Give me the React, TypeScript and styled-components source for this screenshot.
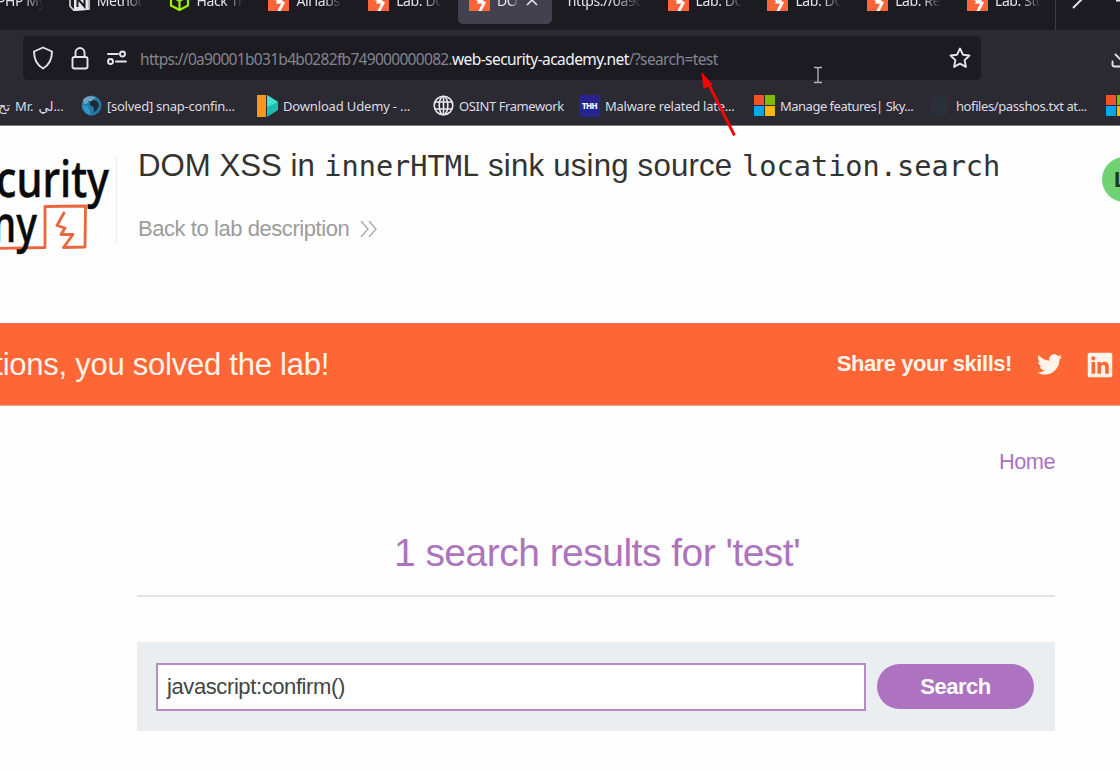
import React from "react";
import styled, { createGlobalStyle, css } from "styled-components";
import { FaTwitter, FaLinkedin } from "react-icons/fa";

const UI = `"Noto Sans", "Open Sans", "DejaVu Sans", sans-serif`;
const PAGE = `"Liberation Sans", Arial, sans-serif`;

const GlobalStyle = createGlobalStyle`
  * { box-sizing: border-box; }
  html, body { margin: 0; padding: 0; background: #fff; overflow: hidden; }
  #root { width: 1120px; height: 771px; overflow: hidden; }
`;

const Window = styled.div`
  position: relative;
  width: 1120px;
  height: 771px;
  overflow: hidden;
  display: flex;
  flex-direction: column;
  background: #fefefe;
`;

/* ---------- browser chrome ---------- */

const Chrome = styled.header`
  flex: none;
  height: 126px;
  background: #2b2a33;
  border-bottom: 1px solid #77767b;
  font-family: ${UI};
  color: #e4e3e8;
`;

const TabStrip = styled.div`
  height: 30px;
  overflow: hidden;
  display: flex;
  align-items: flex-end;
  background: #1c1b22;
`;

const TabRow = styled.div`
  flex: none;
  display: flex;
  width: 1099px;
  margin-left: -43px;
  height: 54px;
  border-right: 1px solid #3d3c45;
`;

const Tab = styled.div<{ $active?: boolean }>`
  flex: none;
  width: ${(p) => (p.$active ? "94px" : "99.8px")};
  ${(p) => p.$active && css`margin: 0 3.8px 0 2px;`}
  height: 48px;
  padding-left: ${(p) => (p.$active ? "11px" : "12px")};
  display: flex;
  align-items: center;
  gap: 7px;
  border-radius: 5px;
  background: ${(p) => (p.$active ? "#42414d" : "transparent")};
`;

const TabTitle = styled.span<{ $w?: number }>`
  flex: none;
  width: ${(p) => p.$w ?? 46}px;
  overflow: hidden;
  white-space: nowrap;
  font-size: 14px;
  line-height: 20px;
  padding-top: 1px;
  letter-spacing: -0.4px;
  mask-image: linear-gradient(to right, #000 60%, transparent 100%);
`;

const TabTools = styled.div`
  flex: none;
  display: flex;
  padding-left: 14px;
  height: 54px;
  align-items: flex-start;
`;

const NavBar = styled.div`
  height: 56px;
  padding: 6px 0 0 23px;
  display: flex;
  align-items: flex-start;
`;

const UrlField = styled.div`
  flex: none;
  width: 958px;
  height: 44px;
  padding: 0 9px;
  border-radius: 5px;
  background: #1c1b22;
  display: flex;
  align-items: center;
`;

const UrlIcons = styled.div`
  flex: none;
  width: 108px;
  height: 44px;
`;

const Url = styled.div`
  flex: 1;
  font-size: 15.5px;
  line-height: 24px;
  padding-top: 2px;
  white-space: nowrap;
`;

const UrlPart = styled.span<{ $ls: number; $host?: boolean }>`
  letter-spacing: ${(p) => p.$ls}px;
  color: ${(p) => (p.$host ? "#f4f3f7" : "#85848b")};
`;

const DownloadSlot = styled.div`
  flex: none;
  margin-left: 129px;
  height: 42px;
  display: flex;
  align-items: center;
`;

const Bookmarks = styled.div`
  height: 39px;
  display: flex;
  align-items: center;
  svg {
    flex: none;
  }
`;

const Bookmark = styled.div<{ $w: number }>`
  flex: none;
  width: ${(p) => p.$w}px;
  display: flex;
  align-items: center;
  gap: 5px;
`;

const BookmarkText = styled.span<{ $ls: number }>`
  font-size: 13px;
  line-height: 20px;
  white-space: nowrap;
  letter-spacing: ${(p) => p.$ls}px;
  color: #dddce2;
`;

const ArabicBookmark = styled.div`
  flex: none;
  width: 81px;
  display: flex;
  gap: 5px;
  font-size: 13px;
  line-height: 20px;
  white-space: nowrap;
  color: #dddce2;
`;

const ArabicStart = styled.span`
  width: 10px;
  display: flex;
  justify-content: flex-end;
`;

/* ---------- page ---------- */

const LabHeader = styled.section`
  flex: none;
  height: 197px;
  display: flex;
  align-items: flex-start;
  font-family: ${PAGE};
`;

const LogoBox = styled.div`
  flex: none;
  width: 117px;
  height: 88px;
  margin-top: 30px;
  border-right: 1px solid #ececec;
`;

const LabText = styled.div`
  flex: none;
  width: 985px;
  padding: 21px 0 0 21px;
`;

const Title = styled.h1`
  margin: 0;
  font-weight: 400;
  font-size: 31.2px;
  line-height: 38px;
  white-space: nowrap;
  color: #333332;
`;

const TitleMiddle = styled.span`
  letter-spacing: 0.2px;
`;

const Code = styled.code`
  margin-left: 0.8px;
  font-family: "DejaVu Sans Mono", monospace;
  font-size: 28.6px;
  line-height: 1;
`;

const BackLink = styled.a`
  margin-top: 31px;
  display: flex;
  align-items: center;
  gap: 11px;
  font-size: 22px;
  letter-spacing: -0.44px;
  line-height: 26px;
  color: #9c9c9c;
`;

const LabBadge = styled.span`
  flex: none;
  margin-top: 31px;
  width: 90px;
  height: 45px;
  padding-left: 12px;
  border-radius: 23px;
  background: #70d272;
  color: #1d3a20;
  font-size: 22.5px;
  font-weight: 700;
  line-height: 45px;
`;

const Banner = styled.section`
  flex: none;
  height: 83px;
  padding: 0 6px 0 0;
  display: flex;
  align-items: center;
  background: #ff6635;
  border-top: 1px solid #e5764f;
  border-bottom: 1px solid #eba587;
  font-family: ${PAGE};
  color: #fff3ea;
`;

const BannerMessage = styled.p`
  margin: 0;
  width: 329px;
  display: flex;
  justify-content: flex-end;
  font-size: 31px;
  letter-spacing: -0.25px;
  line-height: 40px;
  white-space: nowrap;
`;

const Share = styled.div`
  margin-left: auto;
  display: flex;
  align-items: center;
  gap: 24.5px;
  font-size: 22px;
  letter-spacing: -0.45px;
  font-weight: 700;
  line-height: 26px;
`;

const ShareLabel = styled.span`
  padding-bottom: 2px;
`;

const Content = styled.main`
  flex: none;
  width: 918px;
  margin-left: 137px;
  display: flex;
  flex-direction: column;
  font-family: ${PAGE};
  color: #ad74bd;
`;

const Home = styled.a`
  align-self: flex-end;
  margin-top: 43px;
  font-size: 21.8px;
  letter-spacing: -0.55px;
  line-height: 26px;
`;

const Results = styled.h2`
  margin: 56px 0 0;
  padding: 0 0 0 2px;
  height: 66px;
  text-align: center;
  font-size: 39px;
  letter-spacing: -0.52px;
  font-weight: 400;
  line-height: 43px;
  border-bottom: 2px solid #e3e3e5;
`;

const SearchPanel = styled.form`
  margin: 45px 0 0;
  height: 89px;
  padding: 0 21px 0 19px;
  display: flex;
  align-items: center;
  gap: 11px;
  background: #eaeef1;
`;

const SearchInput = styled.div`
  flex: 1;
  height: 48px;
  padding-left: 9px;
  border: 2px solid #b68cc4;
  background: #fff;
  color: #444;
  font-size: 22px;
  letter-spacing: -0.4px;
  line-height: 44px;
`;

const SearchButton = styled.button`
  flex: none;
  width: 157px;
  height: 45px;
  padding: 0;
  border: 0;
  border-radius: 23px;
  background: #ad73c0;
  color: #fff;
  font-family: ${PAGE};
  font-size: 22px;
  letter-spacing: -0.5px;
  font-weight: 700;
`;

/* ---------- overlays ---------- */

const Arrow = styled.svg`
  position: absolute;
  left: 695px;
  top: 68px;
`;

const TextCursor = styled.svg`
  position: absolute;
  left: 811px;
  top: 66px;
`;

/* ---------- icons ---------- */

const Burp = () => (
  <svg width="21" height="21" viewBox="0 0 21 21">
    <rect width="21" height="21" fill="#fa6437" />
    <path d="M12 1 4 9l5 2-1 2.500 5 .3L9.500 21l3 0L17 12.500l-3-2z" fill="#fff" />
  </svg>
);

const Notion = () => (
  <svg width="21" height="21" viewBox="0 0 21 21">
    <path d="M1 2 15 1l5 4v14l-15 1.500L1 16z" fill="#1c1b22" stroke="#dedee2" strokeWidth="1.600" />
    <path d="M5 6h14v13.500L5 20z" fill="#e8e8ec" />
    <path d="M8.500 17V8.500l7 8V8" fill="none" stroke="#1c1b22" strokeWidth="2" />
  </svg>
);

const HackBox = () => (
  <svg width="21" height="21" viewBox="0 0 21 21" fill="none" stroke="#9fef00" strokeWidth="2.200" strokeLinejoin="round">
    <path d="M10.500 1 19 6v9.500l-8.500 4.500L2 15.500V6zM2 6l8.500 5L19 6M10.500 11v9" />
  </svg>
);

const Microsoft = () => (
  <svg width="21" height="21" viewBox="0 0 21 21">
    <path d="M0 0h10v10H0z" fill="#f1512b" />
    <path d="M11 0h10v10H11z" fill="#80bb0b" />
    <path d="M0 11h10v10H0z" fill="#04a4ee" />
    <path d="M11 11h10v10H11z" fill="#fbb90c" />
  </svg>
);

const Earth = () => (
  <svg width="21" height="21" viewBox="0 0 21 21">
    <circle cx="10.500" cy="10.500" r="10" fill="#2379a8" />
    <path d="M2 5C4 1 11 0 15 3l-3 1-1 2-4 0-1 3-3 0z" fill="#72a4bd" />
    <path d="M9 6.500l4-1.500 4 2 1 4-3 5-2 1-.5-5-3.500-2z" fill="#1d2b39" />
    <path d="M1.500 10l5 1 2 4 1 5-4-1.500-3-4z" fill="#3596c6" />
  </svg>
);

const Udemy = () => (
  <svg width="21" height="22" viewBox="0 0 21 22">
    <path d="M0 0h9v22H0z" fill="#f7981d" />
    <path d="M10 0l11 7v8l-11 7z" fill="#18bfae" />
    <path d="M10 0l11 7-11 5z" fill="#45e0cd" />
  </svg>
);

const Globe = () => (
  <svg width="21" height="21" viewBox="0 0 21 21" fill="none" stroke="#e8e7ec" strokeWidth="1.600">
    <circle cx="10.500" cy="10.500" r="9.300" />
    <ellipse cx="10.500" cy="10.500" rx="4.300" ry="9.300" />
    <path d="M1.800 7h17.400M1.800 14h17.400M10.500 1v19" />
  </svg>
);

const ThhBox = styled.span`
  flex: none;
  width: 21px;
  height: 22px;
  background: #27238f;
  color: #fff;
  font-size: 8px;
  font-weight: 800;
  letter-spacing: -0.6px;
  line-height: 22px;
  text-align: center;
`;

const DarkIcon = styled.span`
  flex: none;
  width: 17px;
  height: 18px;
  border-radius: 3px;
  background: #29303a;
`;

const labTabs = ["Lab: DOM", "Lab: DOM", "Lab: Ref", "Lab: Stored"];

export default function App() {
  return (
    <Window>
      <GlobalStyle />
      <Chrome>
        <TabStrip>
          <TabRow>
            <Tab><svg width="21" height="21" /><TabTitle>PHP MySQL</TabTitle></Tab>
            <Tab><Notion /><TabTitle>Methodology</TabTitle></Tab>
            <Tab><HackBox /><TabTitle>Hack The</TabTitle></Tab>
            <Tab><Burp /><TabTitle>All labs |</TabTitle></Tab>
            <Tab><Burp /><TabTitle>Lab: DOM</TabTitle></Tab>
            <Tab $active>
              <Burp /><TabTitle $w={22}>DOM</TabTitle>
              <svg width="12" height="12" viewBox="0 0 12 12" stroke="#e4e3e8" strokeWidth="1.600"><path d="M1 1l10 10M11 1 1 11" /></svg>
            </Tab>
            <Tab><TabTitle $w={74}>https://0a900</TabTitle></Tab>
            {labTabs.map((t, i) => (
              <Tab key={i}><Burp /><TabTitle>{t}</TabTitle></Tab>
            ))}
          </TabRow>
          <TabTools>
            <svg width="60" height="54" viewBox="0 0 60 54" fill="none" stroke="#e4e3e8" strokeWidth="2">
              <path d="M3 15l9 8-9 9" />
              <path d="M46 24h14" strokeWidth="3" />
            </svg>
          </TabTools>
        </TabStrip>
        <NavBar>
          <UrlField>
            <UrlIcons>
              <svg width="108" height="44" viewBox="0 0 108 44" fill="none" stroke="#e4e3e8" strokeWidth="1.900" strokeLinejoin="round" strokeLinecap="round">
                <path d="M11 11.500 2 15.500c0 7 2 13 9 17 7-4 9-10 9-17z" />
                <rect x="40.500" y="21" width="15" height="11.500" rx="2" />
                <path d="M43.500 21v-4.500a4.500 4.500 0 0 1 9 0V21" />
                <path d="M76 18h10M84 25.500h10" />
                <circle cx="90.500" cy="18" r="2.500" />
                <circle cx="78.500" cy="25.500" r="2.500" />
              </svg>
            </UrlIcons>
            <Url>
              <UrlPart $ls={-0.69}>https://0a90001b031b4b0282fb749000000082.</UrlPart>
              <UrlPart $ls={-0.57} $host>web-security-academy.net</UrlPart>
              <UrlPart $ls={-0.6}>/?search=test</UrlPart>
            </Url>
            <svg width="24" height="24" viewBox="0 0 24 24" fill="none" stroke="#e4e3e8" strokeWidth="1.900" strokeLinejoin="round">
              <path d="M12 2.500l2.900 6.200 6.600.8-4.900 4.600 1.300 6.800L12 17.600l-5.900 3.300 1.300-6.800-4.900-4.600 6.600-.8z" />
            </svg>
          </UrlField>
          <DownloadSlot>
            <svg width="22" height="22" viewBox="0 0 22 22" fill="none" stroke="#e4e3e8" strokeWidth="1.900" strokeLinecap="round" strokeLinejoin="round">
              <path d="M11 1v12M5.500 8.500 11 14l5.500-5.500M2.500 15.500v3a2 2 0 0 0 2 2h13a2 2 0 0 0 2-2v-3" />
            </svg>
          </DownloadSlot>
        </NavBar>
        <Bookmarks>
          <ArabicBookmark>
            <ArabicStart>تح</ArabicStart><span>Mr.</span><span dir="ltr">لي...</span>
          </ArabicBookmark>
          <Bookmark $w={176}><Earth /><BookmarkText $ls={-0.25}>[solved] snap-confin...</BookmarkText></Bookmark>
          <Bookmark $w={176}><Udemy /><BookmarkText $ls={-0.16}>Download Udemy - ...</BookmarkText></Bookmark>
          <Bookmark $w={146}><Globe /><BookmarkText $ls={-0.42}>OSINT Framework</BookmarkText></Bookmark>
          <Bookmark $w={175}><ThhBox>THH</ThhBox><BookmarkText $ls={-0.26}>Malware related late...</BookmarkText></Bookmark>
          <Bookmark $w={177}><Microsoft /><BookmarkText $ls={-0.5}>Manage features| Sky...</BookmarkText></Bookmark>
          <Bookmark $w={175}><DarkIcon /><BookmarkText $ls={-0.4}>&nbsp;hofiles/passhos.txt at...</BookmarkText></Bookmark>
          <Microsoft />
        </Bookmarks>
      </Chrome>

      <LabHeader>
        <LogoBox>
          <svg width="116" height="100" viewBox="0 0 116 100">
            <path
              d="M-2 92.500 45 91.500V50.500L85.500 50l-.5 41-21.500.5L73 78.500H61l4-6.500-8-2.500L64.500 56"
              fill="none"
              stroke="#e8673f"
              strokeWidth="2.800"
              strokeLinejoin="round"
            />
            <g fontFamily="Noto Sans" fontWeight="500" fontSize="51" fill="#0a0a0a" stroke="#0a0a0a" strokeWidth="0.500">
              <text x="-4" y="41" textLength="113" lengthAdjust="spacingAndGlyphs">curity</text>
              <text x="-21" y="86" textLength="58" lengthAdjust="spacingAndGlyphs">my</text>
            </g>
          </svg>
        </LogoBox>
        <LabText>
          <Title>
            DOM XSS in <Code>innerHTML</Code><TitleMiddle> sink using source </TitleMiddle><Code>location.search</Code>
          </Title>
          <BackLink>
            Back to lab description
            <svg width="17" height="18" viewBox="0 0 17 18" fill="none" stroke="#a8a8a8" strokeWidth="1.300">
              <path d="M1 1l7 8-7 8M9 1l7 8-7 8" />
            </svg>
          </BackLink>
        </LabText>
        <LabBadge>LAB</LabBadge>
      </LabHeader>

      <Banner>
        <BannerMessage>Congratulations, you solved the lab!</BannerMessage>
        <Share>
          <ShareLabel>Share your skills!</ShareLabel>
          <FaTwitter size={25} />
          <FaLinkedin size={28} />
        </Share>
      </Banner>

      <Content>
        <Home>Home</Home>
        <Results>1 search results for 'test'</Results>
        <SearchPanel>
          <SearchInput>javascript:confirm()</SearchInput>
          <SearchButton type="button">Search</SearchButton>
        </SearchPanel>
      </Content>

      <TextCursor width="14" height="18" viewBox="0 0 14 18" fill="none" stroke="#b5b4ba" strokeWidth="1.300">
        <path d="M3 1.500h3l1 1 1-1h3M7 2.500v13M3 16.500h3l1-1 1 1h3" />
      </TextCursor>
      <Arrow width="45" height="72" viewBox="0 0 45 72">
        <path d="M14 17 39.500 67.500" stroke="#fe0000" strokeWidth="2.800" />
        <path d="M6.500 4 17.500 16.500 8.500 21z" fill="#fe0000" />
      </Arrow>
    </Window>
  );
}
